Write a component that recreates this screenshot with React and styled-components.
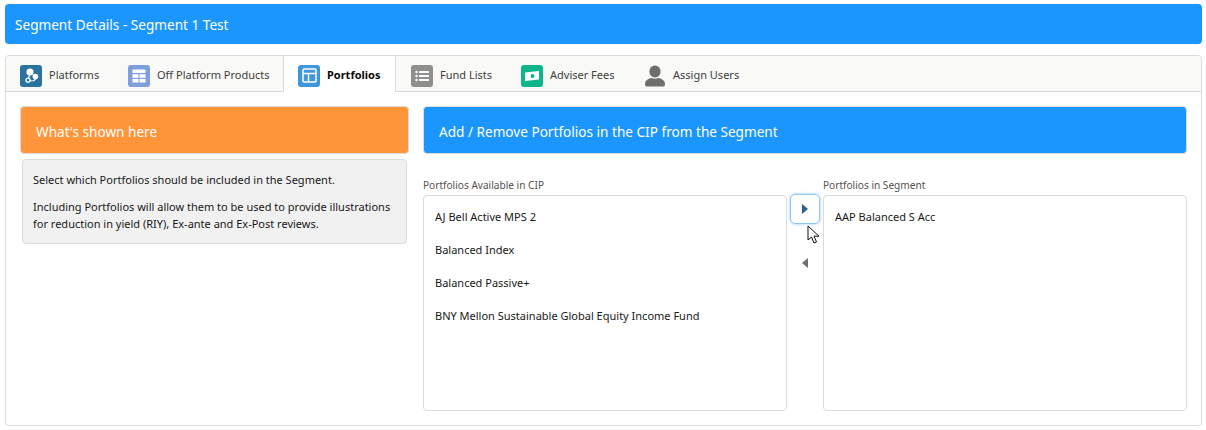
import React from "react"
import styled, { createGlobalStyle } from "styled-components"

const GlobalStyle = createGlobalStyle`
  html, body {
    margin: 0;
    padding: 0;
    background: #fff;
    font-family: "Noto Sans", "Open Sans", sans-serif;
    font-size: 12px;
    color: #181818;
  }
`

const Page = styled.div`
  width: 1206px;
  height: 430px;
  box-sizing: border-box;
  padding: 4px 4px 4px 5px;
  display: flex;
  flex-direction: column;
  gap: 11px;
  overflow: hidden;
`

const PageHeader = styled.div`
  height: 40px;
  flex: none;
  display: flex;
  align-items: center;
  padding: 0 10px;
  background: #1b96ff;
  border-radius: 4px;
  color: #fff;
  font-size: 13.6px;
`

const TabCard = styled.div`
  flex: 1;
  display: flex;
  flex-direction: column;
  border: 1px solid #dddbda;
  border-radius: 4px;
  min-height: 0;
`

const TabBar = styled.div`
  height: 35px;
  flex: none;
  display: flex;
  background: #f9f9f7;
  border-bottom: 1px solid #dddbda;
  border-radius: 4px 4px 0 0;
  padding-left: 2px;
`

const Tab = styled.div`
  box-sizing: border-box;
  height: ${p => (p.$active ? "36px" : "35px")};
  width: ${p => p.$width}px;
  display: flex;
  align-items: center;
  gap: 7px;
  padding-left: ${p => p.$pad}px;
  padding-top: 4px;
  padding-bottom: ${p => (p.$active ? "1px" : "0")};
  font-size: 11px;
  color: ${p => (p.$active ? "#080707" : "#3e3e3c")};
  font-weight: ${p => (p.$active ? 700 : 400)};
  background: ${p => (p.$active ? "#fff" : "transparent")};
  border-left: ${p => (p.$active ? "1px solid #dddbda" : "none")};
  border-right: ${p => (p.$active ? "1px solid #dddbda" : "none")};
`

const TabLabel = styled.span`
  margin-top: -2px;
`

const IconTile = styled.span`
  width: 22px;
  height: 22px;
  flex: none;
  display: flex;
  align-items: center;
  justify-content: center;
  border-radius: 3px;
  background: ${p => p.$bg};
  svg { display: block; }
`

const Content = styled.div`
  flex: 1;
  display: grid;
  grid-template-columns: 389px 1fr;
  column-gap: 14px;
  padding: 14px 14px 14px 14px;
  min-height: 0;
`

const SideColumn = styled.div`
  display: flex;
  flex-direction: column;
  gap: 5px;
`

const Banner = styled.div`
  box-sizing: border-box;
  height: 48px;
  flex: none;
  display: flex;
  align-items: center;
  padding: 3px 0 0 15px;
  border: 1px solid #dddbda;
  border-radius: 4px;
  background: ${p => p.$bg};
  color: #fff;
  font-size: 13.6px;
`

const HelpBox = styled.div`
  box-sizing: border-box;
  height: 85px;
  margin: 0 2px;
  padding: 11px 10px;
  background: #f1f1f1;
  border: 1px solid #dddbda;
  border-radius: 4px;
  font-size: 11px;
  line-height: 17px;
`

const HelpLine = styled.p`
  margin: 0 0 10px;
  &:last-child { margin-bottom: 0; }
`

const MainColumn = styled.div`
  display: flex;
  flex-direction: column;
  min-height: 0;
`

const Picker = styled.div`
  flex: 1;
  margin-top: 23px;
  display: grid;
  grid-template-columns: 364px 36px 364px;
  min-height: 0;
`

const ListColumn = styled.div`
  display: flex;
  flex-direction: column;
  min-height: 0;
`

const ListLabel = styled.div`
  height: 18px;
  flex: none;
  font-size: 10.1px;
  line-height: 16px;
  color: #54514f;
`

const ListBox = styled.div`
  flex: 1;
  box-sizing: border-box;
  border: 1px solid #dddbda;
  border-radius: 4px;
  padding: 4px 0 0 11px;
  background: #fff;
`

const ListItem = styled.div`
  height: 33px;
  display: flex;
  align-items: center;
  font-size: 11px;
  color: #181818;
`

const MoveColumn = styled.div`
  position: relative;
  display: flex;
  flex-direction: column;
  align-items: center;
  padding-top: 17px;
`

const MoveButton = styled.div`
  box-sizing: border-box;
  width: 30px;
  height: 30px;
  display: flex;
  align-items: center;
  justify-content: center;
  border-radius: 5px;
  border: 1px solid ${p => (p.$focus ? "#8cc6f5" : "transparent")};
  box-shadow: ${p => (p.$focus ? "0 0 3px #1b96ff88" : "none")};
  margin-bottom: 24px;
`

const Cursor = styled.svg`
  position: absolute;
  left: 20px;
  top: 48px;
`

const Arrow = ({ dir, color }) => (
  <svg width="6" height="10" viewBox="0 0 6 10">
    <path d={dir === "right" ? "M0 0 L6 5 L0 10 Z" : "M6 0 L0 5 L6 10 Z"} fill={color} />
  </svg>
)

const PlatformsIcon = () => (
  <svg width="16" height="16" viewBox="0 0 16 16" fill="#fff">
    <circle cx="7" cy="4" r="3.6" />
    <circle cx="12.4" cy="8.6" r="2.8" />
    <circle cx="5" cy="12.2" r="2" fill="none" stroke="#fff" strokeWidth="1.3" />
    <path d="M6.6 7 L5.5 10 M7 12.8 L11 12.8 L12.6 10.6" fill="none" stroke="#fff" strokeWidth="1.1" />
  </svg>
)

const TableIcon = () => (
  <svg width="14" height="14" viewBox="0 0 14 14" fill="#fff">
    <rect x="0.5" y="0.5" width="13" height="3.6" rx="0.8" />
    <rect x="0.5" y="5.2" width="6" height="3.6" />
    <rect x="7.5" y="5.2" width="6" height="3.6" />
    <rect x="0.5" y="9.9" width="6" height="3.6" />
    <rect x="7.5" y="9.9" width="6" height="3.6" />
  </svg>
)

const LayoutIcon = () => (
  <svg width="15" height="15" viewBox="0 0 15 15" fill="none" stroke="#fff" strokeWidth="1.5">
    <rect x="1" y="1" width="13" height="13" rx="1" />
    <path d="M1 5.5 H14 M6.5 5.5 V14" />
  </svg>
)

const ListIcon = () => (
  <svg width="14" height="12" viewBox="0 0 14 12" fill="#fff">
    <circle cx="1.5" cy="2" r="1.2" />
    <circle cx="1.5" cy="6" r="1.2" />
    <circle cx="1.5" cy="10" r="1.2" />
    <rect x="4" y="1" width="10" height="2" rx="0.5" />
    <rect x="4" y="5" width="10" height="2" rx="0.5" />
    <rect x="4" y="9" width="10" height="2" rx="0.5" />
  </svg>
)

const MoneyIcon = () => (
  <svg width="14" height="10" viewBox="0 0 14 10">
    <path d="M0 1.5 L14 0 V8.5 L0 10 Z" fill="#fff" />
    <circle cx="7.5" cy="5" r="2" fill="#0eb58a" />
  </svg>
)

const UserIcon = () => (
  <svg width="22" height="22" viewBox="0 0 22 22" fill="#706e6b">
    <ellipse cx="11" cy="6.5" rx="5.6" ry="6" />
    <path d="M1 19 C1 15 5 13.5 8 13 C9.5 14 12.5 14 14 13 C17 13.5 21 15 21 19 C21 21 20 21.5 19 21.5 H3 C2 21.5 1 21 1 19 Z" />
  </svg>
)

const tabs = [
  { label: "Platforms", width: 108, pad: 12, bg: "#2a739e", icon: <PlatformsIcon /> },
  { label: "Off Platform Products", width: 167, pad: 12, bg: "#7f9fdb", icon: <TableIcon /> },
  { label: "Portfolios", width: 113, pad: 14, bg: "#3e96db", icon: <LayoutIcon />, active: true },
  { label: "Fund Lists", width: 110, pad: 15, bg: "#8f8f8d", icon: <ListIcon /> },
  { label: "Adviser Fees", width: 123, pad: 15, bg: "#0eb58a", icon: <MoneyIcon /> },
  { label: "Assign Users", width: 120, pad: 15, bg: "transparent", icon: <UserIcon /> },
]

const available = [
  "AJ Bell Active MPS 2",
  "Balanced Index",
  "Balanced Passive+",
  "BNY Mellon Sustainable Global Equity Income Fund",
]

const App = () => {
  return (
    <Page>
      <GlobalStyle />
      <PageHeader>Segment Details - Segment 1 Test</PageHeader>
      <TabCard>
        <TabBar>
          {tabs.map(tab => (
            <Tab key={tab.label} $active={tab.active} $width={tab.width} $pad={tab.pad}>
              <IconTile $bg={tab.bg}>{tab.icon}</IconTile>
              <TabLabel>{tab.label}</TabLabel>
            </Tab>
          ))}
        </TabBar>
        <Content>
          <SideColumn>
            <Banner $bg="#ff9438">What's shown here</Banner>
            <HelpBox>
              <HelpLine>Select which Portfolios should be included in the Segment.</HelpLine>
              <HelpLine>
                Including Portfolios will allow them to be used to provide illustrations for
                reduction in yield (RIY), Ex-ante and Ex-Post reviews.
              </HelpLine>
            </HelpBox>
          </SideColumn>
          <MainColumn>
            <Banner $bg="#1b96ff">Add / Remove Portfolios in the CIP from the Segment</Banner>
            <Picker>
              <ListColumn>
                <ListLabel>Portfolios Available in CIP</ListLabel>
                <ListBox>
                  {available.map(name => (
                    <ListItem key={name}>{name}</ListItem>
                  ))}
                </ListBox>
              </ListColumn>
              <MoveColumn>
                <MoveButton $focus>
                  <Arrow dir="right" color="#2e5f94" />
                </MoveButton>
                <MoveButton>
                  <Arrow dir="left" color="#706e6b" />
                </MoveButton>
                <Cursor width="14" height="20" viewBox="0 0 14 20">
                  <path d="M1 1 V15 L4.5 12 L7 18 L9.5 17 L7 11.2 H12 Z" fill="#fff" stroke="#111" strokeWidth="1" />
                </Cursor>
              </MoveColumn>
              <ListColumn>
                <ListLabel>Portfolios in Segment</ListLabel>
                <ListBox>
                  <ListItem>AAP Balanced S Acc</ListItem>
                </ListBox>
              </ListColumn>
            </Picker>
          </MainColumn>
        </Content>
      </TabCard>
    </Page>
  )
}

export default App
